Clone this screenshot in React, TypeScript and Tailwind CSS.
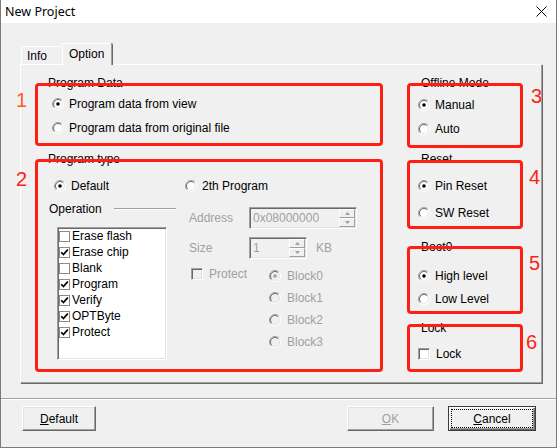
import React from "react";

// classic Win32-style "New Project" dialog, Option tab, with red annotation boxes

function Radio({ checked = false, disabled = false }: { checked?: boolean; disabled?: boolean }) {
  return (
    <svg width="12" height="12" viewBox="0 0 12 12" className="shrink-0">
      <circle cx="6" cy="6" r="5.5" fill={disabled ? "#f0f0f0" : "#ffffff"} />
      <path d="M2.1 9.9 A5.5 5.5 0 0 1 9.9 2.1" fill="none" stroke="#a0a0a0" />
      <path d="M2.8 9.2 A4.5 4.5 0 0 1 9.2 2.8" fill="none" stroke="#696969" />
      <path d="M9.9 2.1 A5.5 5.5 0 0 1 2.1 9.9" fill="none" stroke="#ffffff" />
      <path d="M9.2 2.8 A4.5 4.5 0 0 1 2.8 9.2" fill="none" stroke="#e3e3e3" />
      {checked && <circle cx="6" cy="6" r="1.8" fill={disabled ? "#a0a0a0" : "#000000"} />}
    </svg>
  );
}

function RadioRow({ label, checked, disabled, className }: { label: string; checked?: boolean; disabled?: boolean; className: string }) {
  return (
    <div className={`flex items-center ${className}`}>
      <Radio checked={checked} disabled={disabled} />
      <span className={disabled ? "text-[#a0a0a0]" : "text-black"}>{label}</span>
    </div>
  );
}

function SunkenCheck({ disabled = false }: { disabled?: boolean }) {
  return (
    <div
      className={`h-[12px] w-[12px] shrink-0 border border-t-[#a0a0a0] border-l-[#a0a0a0] border-r-white border-b-white shadow-[inset_1px_1px_0_#696969,inset_-1px_-1px_0_#e3e3e3] ${
        disabled ? "bg-[#f0f0f0]" : "bg-white"
      }`}
    />
  );
}

function ListCheck({ checked }: { checked: boolean }) {
  return (
    <div className="flex h-[11px] w-[11px] shrink-0 items-center justify-center border border-[#8a8a8a] bg-white">
      {checked && (
        <svg width="9" height="9" viewBox="0 0 9 9">
          <path d="M1.2 4.2 L3.4 6.6 L7.8 1.6" fill="none" stroke="#000" strokeWidth="1.7" />
        </svg>
      )}
    </div>
  );
}

function SpinArrow({ up }: { up: boolean }) {
  return (
    <svg width="5" height="3" viewBox="0 0 5 3">
      <path d={up ? "M2.5 0 L5 3 L0 3 Z" : "M0 0 L5 0 L2.5 3 Z"} fill="#a0a0a0" />
    </svg>
  );
}

function SpinEdit({ value, width }: { value: string; width: string }) {
  return (
    <div
      className={`flex h-[22px] ${width} border border-t-[#a0a0a0] border-l-[#a0a0a0] border-r-white border-b-white bg-[#f0f0f0] p-px shadow-[inset_1px_1px_0_#696969,inset_-1px_-1px_0_#e3e3e3]`}
    >
      <span className="flex-1 pl-[2px] leading-[18px] text-[#a0a0a0]">{value}</span>
      <div className="flex w-[16px] flex-col">
        <div className="flex h-[9px] items-center justify-center border border-t-white border-l-white border-r-[#a0a0a0] border-b-[#a0a0a0] bg-[#f0f0f0]">
          <SpinArrow up />
        </div>
        <div className="flex h-[9px] items-center justify-center border border-t-white border-l-white border-r-[#a0a0a0] border-b-[#a0a0a0] bg-[#f0f0f0]">
          <SpinArrow up={false} />
        </div>
      </div>
    </div>
  );
}

function RedBox() {
  return <div className="pointer-events-none absolute inset-0 rounded-[4px] border-[3px] border-[#ff1e14]" />;
}

const operations: [string, boolean][] = [
  ["Erase flash", false],
  ["Erase chip", true],
  ["Blank", false],
  ["Program", true],
  ["Verify", true],
  ["OPTByte", true],
  ["Protect", true],
];

export default function App() {
  return (
    <div className="flex h-[448px] w-[557px] flex-col overflow-hidden border-x border-b border-[#7a7a7a] bg-[#f0f0f0] font-['Liberation_Sans',Arial,sans-serif] text-[12px] leading-[14px] text-black">
      {/* title bar */}
      <div className="flex h-[23px] shrink-0 items-center justify-between bg-white pl-[4px] pr-[9px]">
        <span className="font-['Noto_Sans',sans-serif] text-[12.5px]">New Project</span>
        <svg width="11" height="11" viewBox="0 0 11 11">
          <path d="M0.5 0.5 L10.5 10.5 M10.5 0.5 L0.5 10.5" stroke="#000" strokeWidth="1" />
        </svg>
      </div>

      {/* tabs */}
      <div className="mt-[20px] flex h-[21px] items-end pl-[20px]">
        <div className="flex h-[18px] w-[41px] items-center rounded-t-[2px] border-l border-t border-white pl-[5px]">Info</div>
        <div className="relative z-10 -mb-px flex h-[22px] w-[50px] items-center rounded-t-[2px] border-l border-r border-t border-white border-r-[#a0a0a0] bg-[#f0f0f0] pb-[2px] pl-[6px] shadow-[1px_0_0_#696969]">
          Option
        </div>
      </div>

      {/* tab page */}
      <div className="ml-[19px] h-[319px] w-[522px] border border-white border-r-[#a0a0a0] border-b-[#a0a0a0] pl-[14px] pt-[18px] shadow-[1px_1px_0_#696969]">
        <div className="flex gap-[24px]">
          {/* left column */}
          <div className="flex w-[348px] flex-col">
            <div className="relative h-[63px]">
              <span className="absolute left-[13px] top-[-7px]">Program Data</span>
              <div className="flex flex-col pl-[17px] pt-[9px]">
                <RadioRow className="h-[24px] gap-[5px]" checked label="Program data from view" />
                <RadioRow className="h-[24px] gap-[5px]" label="Program data from original file" />
              </div>
              <RedBox />
              <span className="absolute left-[-19px] top-[7px] text-[20px] leading-[20px] text-[#ff5a1e]">1</span>
            </div>

            <div className="relative mt-[13px] h-[213px]">
              <span className="absolute left-[13px] top-[-7px]">Program type</span>
              <div className="flex pt-[15px]">
                <RadioRow className="h-[24px] w-[150px] gap-[5px] pl-[19px]" checked label="Default" />
                <RadioRow className="h-[24px] gap-[5px]" label="2th Program" />
              </div>
              <div className="flex">
                <div className="flex w-[154px] flex-col pl-[14px]">
                  <div className="mt-[4px] flex h-[14px] items-center">
                    <span>Operation</span>
                    <div className="ml-[12px] h-[2px] w-[62px] border-t border-b border-t-[#a0a0a0] border-b-white" />
                  </div>
                  <div className="ml-[8px] mt-[11px] h-[133px] w-[110px] border border-t-[#a0a0a0] border-l-[#a0a0a0] border-r-white border-b-white bg-white pl-px shadow-[inset_1px_1px_0_#696969,inset_-1px_-1px_0_#e3e3e3]">
                    {operations.map(([name, on]) => (
                      <div key={name} className="flex h-[16px] items-center gap-[2px]">
                        <ListCheck checked={on} />
                        <span>{name}</span>
                      </div>
                    ))}
                  </div>
                </div>

                <div className="flex flex-col text-[#a0a0a0]">
                  <div className="mt-[9px] flex items-center">
                    <span className="w-[60px]">Address</span>
                    <SpinEdit value="0x08000000" width="w-[108px]" />
                  </div>
                  <div className="mt-[8px] flex items-center">
                    <span className="w-[60px]">Size</span>
                    <SpinEdit value="1" width="w-[58px]" />
                    <span className="ml-[9px]">KB</span>
                  </div>
                  <div className="mt-[6px] flex">
                    <div className="w-[80px] pl-[2px] pt-[3px]">
                      <div className="flex h-[12px] items-center gap-[6px]">
                        <SunkenCheck disabled />
                        <span>Protect</span>
                      </div>
                    </div>
                    <div className="flex flex-col">
                      <RadioRow className="h-[22px] gap-[6px]" checked disabled label="Block0" />
                      <RadioRow className="h-[22px] gap-[6px]" disabled label="Block1" />
                      <RadioRow className="h-[22px] gap-[6px]" disabled label="Block2" />
                      <RadioRow className="h-[22px] gap-[6px]" disabled label="Block3" />
                    </div>
                  </div>
                </div>
              </div>
              <RedBox />
              <span className="absolute left-[-19px] top-[10px] text-[20px] leading-[20px] text-[#ff1e14]">2</span>
            </div>
          </div>

          {/* right column */}
          <div className="flex w-[116px] flex-col">
            <div className="relative h-[65px]">
              <span className="absolute left-[14px] top-[-7px]">Offline Mode</span>
              <div className="flex flex-col pl-[11px] pt-[10px]">
                <RadioRow className="h-[24px] gap-[5px]" checked label="Manual" />
                <RadioRow className="h-[24px] gap-[5px]" label="Auto" />
              </div>
              <RedBox />
              <span className="absolute left-[124px] top-[3px] text-[20px] leading-[20px] text-[#ff1e14]">3</span>
            </div>

            <div className="relative mt-[12px] h-[69px]">
              <span className="absolute left-[14px] top-[-8px]">Reset</span>
              <div className="flex flex-col pl-[11px] pt-[12px]">
                <RadioRow className="h-[27px] gap-[5px]" checked label="Pin Reset" />
                <RadioRow className="h-[27px] gap-[5px]" label="SW Reset" />
              </div>
              <RedBox />
              <span className="absolute left-[122px] top-[7px] text-[20px] leading-[20px] text-[#ff1e14]">4</span>
            </div>

            <div className="relative mt-[17px] h-[68px]">
              <span className="absolute left-[14px] top-[-6px]">Boot0</span>
              <div className="flex flex-col pl-[11px] pt-[18px]">
                <RadioRow className="h-[23px] gap-[5px]" checked label="High level" />
                <RadioRow className="h-[23px] gap-[5px]" label="Low Level" />
              </div>
              <RedBox />
              <span className="absolute left-[122px] top-[7px] text-[20px] leading-[20px] text-[#ff1e14]">5</span>
            </div>

            <div className="relative mt-[10px] h-[48px]">
              <span className="absolute left-[14px] top-[-3px]">Lock</span>
              <div className="mt-[18px] flex h-[24px] items-center gap-[6px] pl-[11px]">
                <SunkenCheck />
                <span>Lock</span>
              </div>
              <RedBox />
              <span className="absolute left-[119px] top-[8px] text-[20px] leading-[20px] text-[#ff1e14]">6</span>
            </div>
          </div>
        </div>
      </div>

      {/* separator + buttons */}
      <div className="mt-[15px] h-[2px] border-t border-b border-t-[#a0a0a0] border-b-white" />
      <div className="mt-[6px] flex h-[25px] pl-[21px] pr-[20px]">
        <button className="flex h-[25px] w-[74px] items-center justify-center border border-t-white border-l-white border-r-[#696969] border-b-[#696969] bg-[#f0f0f0] shadow-[inset_-1px_-1px_0_#a0a0a0,inset_1px_1px_0_#e3e3e3]">
          <span>
            <span className="underline">D</span>efault
          </span>
        </button>
        <div className="ml-auto flex gap-[14px]">
          <button className="flex h-[25px] w-[87px] items-center justify-center border border-t-white border-l-white border-r-[#696969] border-b-[#696969] bg-[#f0f0f0] text-[#a0a0a0] shadow-[inset_-1px_-1px_0_#a0a0a0,inset_1px_1px_0_#e3e3e3]">
            <span>
              <span className="underline">O</span>K
            </span>
          </button>
          <button className="relative flex h-[25px] w-[88px] items-center justify-center border border-[#3c3c3c] bg-[#f0f0f0] shadow-[inset_1px_1px_0_#ffffff,inset_-1px_-1px_0_#696969,inset_-2px_-2px_0_#a0a0a0]">
            <span>
              <span className="underline">C</span>ancel
            </span>
            <div className="absolute inset-[2px] border border-dotted border-black" />
          </button>
        </div>
      </div>
    </div>
  );
}
